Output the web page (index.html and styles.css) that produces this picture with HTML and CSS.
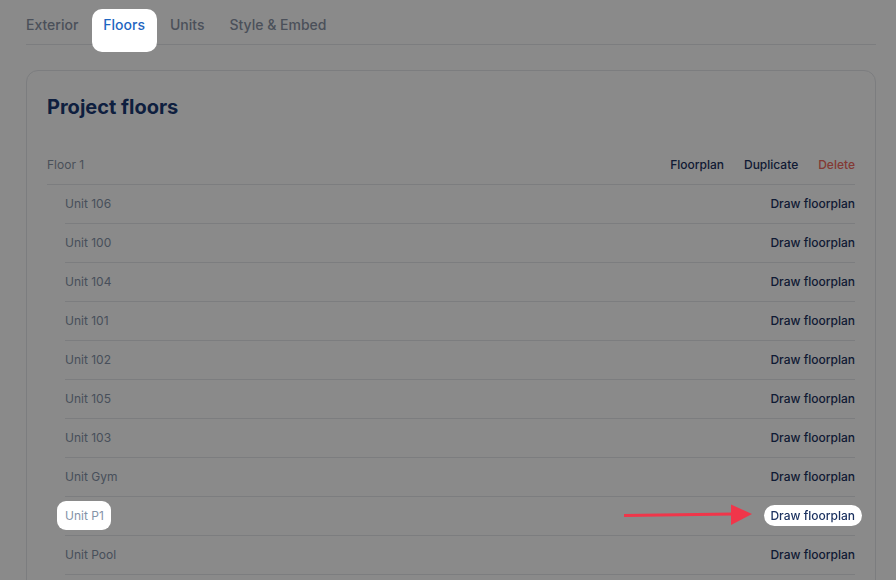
FILE: index.html
```html
<!DOCTYPE html>
<html>
    <head>
        <meta charset="utf-8">
        <title>Project floors</title>
        <link rel="stylesheet" href="styles.css">
    </head>
    <body>
        <div class="page">
            <nav class="tabs">
                <a class="tab">Exterior</a>
                <a class="tab active spot spot-tab">Floors</a>
                <a class="tab">Units</a>
                <a class="tab">Style &amp; Embed</a>
            </nav>

            <section class="card">
                <h1>Project floors</h1>
                <div class="floor">
                    <div class="floor-head">
                        <span class="floor-name">Floor 1</span>
                        <div class="actions">
                            <a>Floorplan</a>
                            <a>Duplicate</a>
                            <a class="danger">Delete</a>
                        </div>
                    </div>
                    <ul class="units">
                        <li class="unit"><span class="unit-name">Unit 106</span><a class="draw">Draw floorplan</a></li>
                        <li class="unit"><span class="unit-name">Unit 100</span><a class="draw">Draw floorplan</a></li>
                        <li class="unit"><span class="unit-name">Unit 104</span><a class="draw">Draw floorplan</a></li>
                        <li class="unit"><span class="unit-name">Unit 101</span><a class="draw">Draw floorplan</a></li>
                        <li class="unit"><span class="unit-name">Unit 102</span><a class="draw">Draw floorplan</a></li>
                        <li class="unit"><span class="unit-name">Unit 105</span><a class="draw">Draw floorplan</a></li>
                        <li class="unit"><span class="unit-name">Unit 103</span><a class="draw">Draw floorplan</a></li>
                        <li class="unit"><span class="unit-name">Unit Gym</span><a class="draw">Draw floorplan</a></li>
                        <li class="unit">
                            <span class="unit-name spot spot-name">Unit P1</span>
                            <svg class="arrow" width="130" height="22" viewBox="0 0 130 22">
                                <path d="M0 11.5 L110 10" stroke="#f0364a" stroke-width="3" stroke-linecap="round" fill="none"/>
                                <path d="M107 0.5 L128 10 L107 21 Z" fill="#f0364a"/>
                            </svg>
                            <a class="draw spot spot-link">Draw floorplan</a>
                        </li>
                        <li class="unit"><span class="unit-name">Unit Pool</span><a class="draw">Draw floorplan</a></li>
                    </ul>
                </div>
            </section>
        </div>

        <div class="overlay"></div>
    </body>
</html>
```

FILE: styles.css
```css
* {
    box-sizing: border-box;
}

body {
    margin: 0;
    background: #ffffff;
    font-family: Inter, "Noto Sans", sans-serif;
    color: #1c3260;
    overflow: hidden;
}

.page {
    padding: 15px 20px 0 26px;
}

/* tabs */
.tabs {
    display: flex;
    gap: 25px;
    border-bottom: 1px solid #e5e7eb;
}
.tab {
    font-size: 14px;
    line-height: 20px;
    font-weight: 500;
    color: #8b95a7;
    padding-bottom: 8px;
    border-bottom: 2px solid transparent;
    margin-bottom: -1px;
}
.tab.active {
    color: #1f66c1;
    border-bottom-color: #1f66c1;
}

/* card */
.card {
    margin-top: 25px;
    border: 1px solid #e5e7eb;
    border-radius: 12px;
    padding: 22px 20px 20px;
    background: #ffffff;
}
.card h1 {
    margin: 0 0 25px;
    font-size: 20px;
    line-height: 28px;
    font-weight: 700;
    color: #1b3a75;
}

.floor-head {
    display: flex;
    align-items: center;
    justify-content: space-between;
    height: 39px;
    border-bottom: 1px solid #e5e7eb;
    font-size: 12px;
    line-height: 16px;
}
.floor-name {
    color: #8a94a5;
}
.actions {
    display: flex;
    gap: 20px;
    font-weight: 500;
}
.actions .danger {
    color: #f26b60;
}

.units {
    list-style: none;
    margin: 0 0 0 18px;
    padding: 0;
}
.unit {
    position: relative;
    display: flex;
    align-items: center;
    justify-content: space-between;
    height: 39px;
    border-bottom: 1px solid #e5e7eb;
    font-size: 12px;
    line-height: 16px;
}
.unit-name {
    color: #8593a8;
}
.draw {
    font-weight: 500;
    color: #1c3260;
}

/* tour overlay */
.overlay {
    position: fixed;
    inset: 0;
    background: rgba(0, 0, 0, 0.46);
    z-index: 10;
}
.spot {
    position: relative;
    z-index: 11;
}
.spot::before {
    content: "";
    position: absolute;
    background: #ffffff;
    z-index: -1;
}
.spot-tab::before {
    inset: -6px -12px -9px -11px;
    border-radius: 10px;
}
.spot-name::before {
    inset: -7px -7px -6px -8px;
    border-radius: 9px;
}
.spot-link::before {
    inset: -3px -7px -2px -6px;
    border-radius: 11px;
}
.arrow {
    position: absolute;
    left: 559px;
    top: 7px;
    z-index: 11;
}
```
